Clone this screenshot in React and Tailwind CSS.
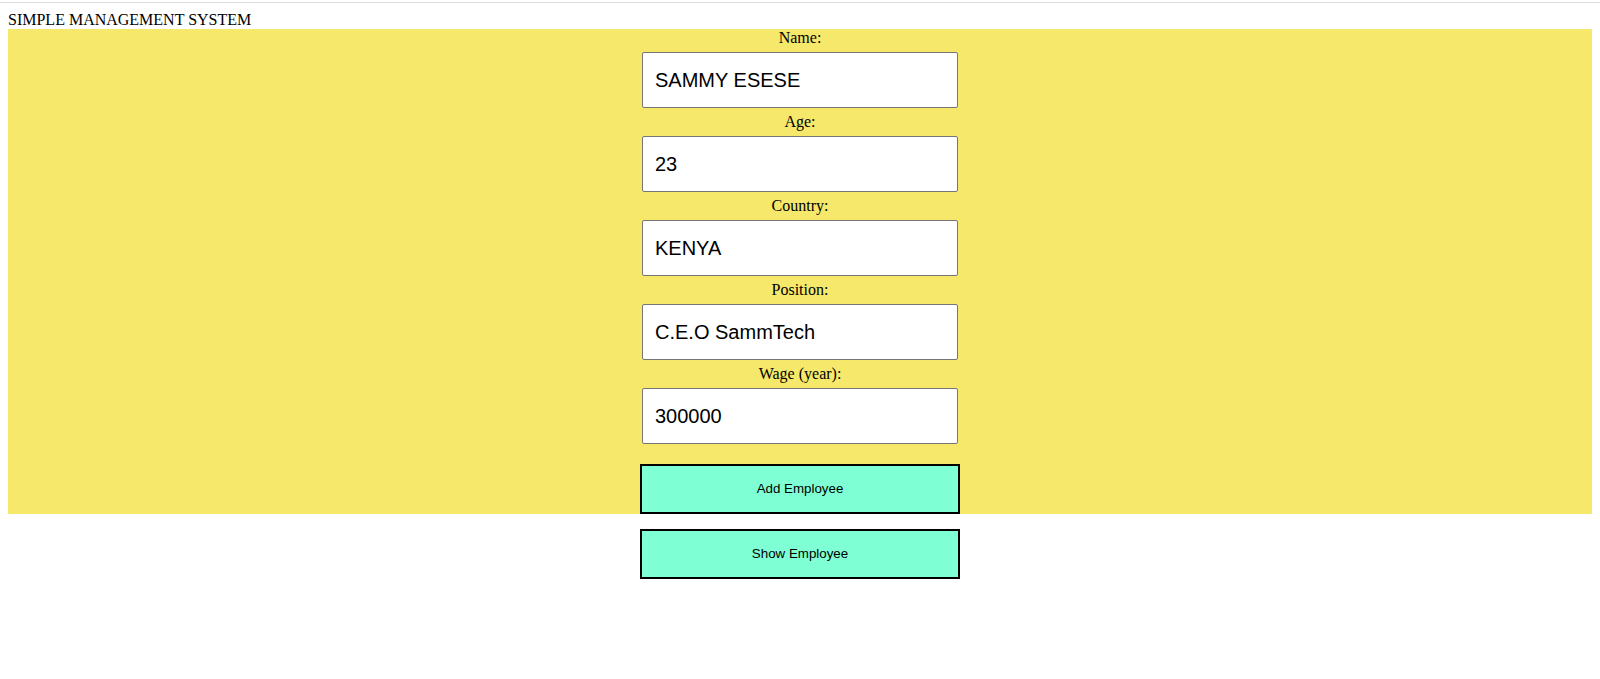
const fields = [
  { label: 'Name:', value: 'SAMMY ESESE' },
  { label: 'Age:', value: '23' },
  { label: 'Country:', value: 'KENYA' },
  { label: 'Position:', value: 'C.E.O SammTech' },
  { label: 'Wage (year):', value: '300000' },
]

export default function App() {
  return (
    <div className="min-h-screen bg-white pt-[2px] font-['Liberation_Serif',serif] text-black">
      <div className="border-t border-[#dddddd]" />
      <div className="px-2 pt-2">
        <h1 className="text-[16px] font-normal leading-[18px]">SIMPLE MANAGEMENT SYSTEM</h1>
        <div className="flex flex-col items-center bg-[#f6e86b]">
          {fields.map((f) => (
            <div key={f.label} className="flex flex-col items-center">
              <label className="text-[16px] leading-[18px]">{f.label}</label>
              <input
                readOnly
                value={f.value}
                className="my-[5px] h-[56px] w-[316px] rounded-[2px] border border-[#767676] bg-white px-3 font-['Liberation_Sans',sans-serif] text-[20px] text-black outline-none"
              />
            </div>
          ))}
          <button
            type="button"
            className="mt-[15px] h-[50px] w-[320px] border-2 border-black bg-[#7fffd4] font-['Liberation_Sans',sans-serif] text-[13.33px] text-black"
          >
            Add Employee
          </button>
        </div>
        <div className="flex justify-center pt-[15px]">
          <button
            type="button"
            className="h-[50px] w-[320px] border-2 border-black bg-[#7fffd4] font-['Liberation_Sans',sans-serif] text-[13.33px] text-black"
          >
            Show Employee
          </button>
        </div>
      </div>
    </div>
  )
}
